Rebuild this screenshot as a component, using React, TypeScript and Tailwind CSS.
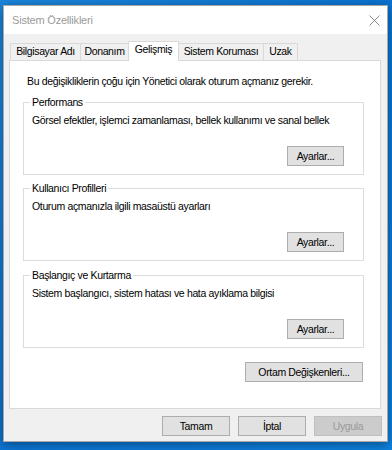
import type { ReactNode } from "react";

function Btn({
  children,
  w,
  disabled,
}: {
  children: ReactNode;
  w: string;
  disabled?: boolean;
}) {
  return (
    <button
      className={`h-[20px] ${w} flex items-center justify-center border text-[10.5px] leading-none ${
        disabled
          ? "bg-[#cccccc] border-[#bfbfbf] text-[#9a9a9a]"
          : "bg-[#e1e1e1] border-[#adadad] text-black"
      }`}
    >
      {children}
    </button>
  );
}

function Group({
  title,
  text,
  className,
}: {
  title: string;
  text: string;
  className?: string;
}) {
  return (
    <fieldset
      className={`ml-[13px] w-[341px] border border-[#dcdcdc] flex flex-col pb-[8px] ${className ?? ""}`}
    >
      <legend className="ml-[6px] px-[2px] leading-[14px]">{title}</legend>
      <p className="mt-[3px] pl-[8px] leading-[16px]">{text}</p>
      <div className="mt-[18px] flex justify-end pr-[19px]">
        <Btn w="w-[57px]">Ayarlar...</Btn>
      </div>
    </fieldset>
  );
}

const tabs = ["Bilgisayar Adı", "Donanım", "Gelişmiş", "Sistem Koruması", "Uzak"];
const tabWidths = ["w-[70px]", "w-[48px]", "w-[51px]", "w-[84px]", "w-[35px]"];

export default function App() {
  return (
    <div className="w-[392px] h-[450px] overflow-hidden bg-gradient-to-br from-[#1a86dc] via-[#0b74d2] to-[#0e80dc] pt-[5px] pl-[3px] font-['Liberation_Sans',Arial,sans-serif] text-[10.5px] tracking-[-0.35px] text-black">
      <div className="w-[385px] h-[437px] bg-[#f0f0f0] border border-[#a8a8a8] shadow-[0_2px_10px_rgba(0,0,0,0.4)] flex flex-col">
        <div className="h-[28px] bg-white flex items-center justify-between pl-[8px] pr-[7px]">
          <span className="text-[#9a9a9a] text-[11px] tracking-[-0.2px]">Sistem Özellikleri</span>
          <svg width="11" height="11" viewBox="0 0 11 11">
            <path d="M0.5 0.5 L10.5 10.5 M10.5 0.5 L0.5 10.5" stroke="#8a8a8a" strokeWidth="1" />
          </svg>
        </div>

        <div className="flex items-end ml-[6px] pt-[7px] h-[26px]">
          {tabs.map((t, i) => {
            const sel = i === 2;
            return (
              <div
                key={t}
                className={`${tabWidths[i]} flex items-center justify-center border-t border-l border-[#d9d9d9] ${
                  i === tabs.length - 1 ? "border-r" : ""
                } ${
                  sel
                    ? "h-[20px] bg-white border-r relative z-10 -mb-px pb-[3px]"
                    : "h-[17px] bg-[#f0f0f0]"
                } ${i === 3 ? "border-l-0" : ""}`}
              >
                {t}
              </div>
            );
          })}
        </div>

        <div className="ml-[5px] w-[372px] h-[349px] bg-white border border-[#d9d9d9] flex flex-col">
          <p className="mt-[12px] pl-[17px] leading-[16px]">
            Bu değişikliklerin çoğu için Yönetici olarak oturum açmanız gerekir.
          </p>
          <Group
            className="mt-[6px]"
            title="Performans"
            text="Görsel efektler, işlemci zamanlaması, bellek kullanımı ve sanal bellek"
          />
          <Group
            className="mt-[6px]"
            title="Kullanıcı Profilleri"
            text="Oturum açmanızla ilgili masaüstü ayarları"
          />
          <Group
            className="mt-[7px]"
            title="Başlangıç ve Kurtarma"
            text="Sistem başlangıcı, sistem hatası ve hata ayıklama bilgisi"
          />
          <div className="mt-[14px] flex justify-end pr-[17px]">
            <Btn w="w-[118px]">Ortam Değişkenleri...</Btn>
          </div>
        </div>

        <div className="mt-[7px] flex justify-end gap-[8px] pr-[5px]">
          <Btn w="w-[68px]">Tamam</Btn>
          <Btn w="w-[68px]">İptal</Btn>
          <Btn w="w-[68px]" disabled>
            Uygula
          </Btn>
        </div>
      </div>
    </div>
  );
}
